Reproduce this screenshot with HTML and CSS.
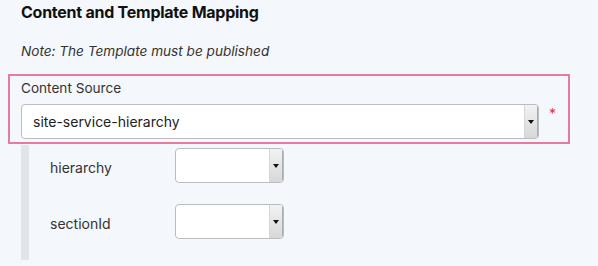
FILE: index.html
```html
<!DOCTYPE html>
<html>

<head>
    <link rel="stylesheet" href="styles.css">
</head>

<body>
    <div class="mapping">
        <h2>Content and Template Mapping</h2>
        <p class="note">Note: The Template must be published</p>

        <div class="source-box">
            <div class="field-label">Content Source</div>
            <div class="field-row">
                <div class="select select-wide">
                    <span class="select-value">site-service-hierarchy</span>
                    <span class="select-arrow"></span>
                </div>
                <span class="required">*</span>
            </div>
        </div>

        <div class="params">
            <div class="param-row">
                <div class="param-label">hierarchy</div>
                <div class="select select-small">
                    <span class="select-value"></span>
                    <span class="select-arrow"></span>
                </div>
            </div>
            <div class="param-row">
                <div class="param-label">sectionId</div>
                <div class="select select-small">
                    <span class="select-value"></span>
                    <span class="select-arrow"></span>
                </div>
            </div>
        </div>
    </div>
</body>

</html>
```

FILE: styles.css
```css
* {
    margin: 0;
    padding: 0;
    box-sizing: border-box;
}

body {
    font-family: 'Inter', 'Noto Sans', sans-serif;
    background-color: #f4f7fb;
    color: #1d1f22;
    width: 598px;
    height: 266px;
    overflow: hidden;
}

.mapping {
    padding: 2px 0 0 8px;
}

h2 {
    font-size: 16px;
    line-height: 20px;
    font-weight: 700;
    color: #111;
    margin-left: 13px;
    letter-spacing: -0.25px;
}

.note {
    font-size: 13.6px;
    line-height: 20px;
    font-style: italic;
    color: #333;
    margin: 19px 0 0 13px;
}

.source-box {
    width: 562px;
    height: 70px;
    margin-top: 13px;
    border: 2px solid #e97a9f;
    padding: 2px 0 0 11px;
}

.field-label {
    font-size: 13.6px;
    line-height: 20px;
    color: #333;
}

.field-row {
    display: flex;
    align-items: flex-start;
    margin-top: 6px;
}

.select {
    display: flex;
    background: #fff;
    border: 1px solid #b9bcc1;
    border-radius: 4px;
    height: 35px;
    overflow: hidden;
}

.select-wide {
    width: 518px;
}

.select-small {
    width: 109px;
}

.select-value {
    flex: 1;
    font-size: 14px;
    line-height: 33px;
    padding-left: 11px;
    color: #222;
}

.select-arrow {
    width: 14px;
    border-left: 1px solid #d4d6d9;
    border-right: 1px solid #a9adb2;
    background: linear-gradient(#f2f2f2, #d8d8d8);
    position: relative;
}

.select-arrow::after {
    content: "";
    position: absolute;
    left: 3px;
    top: 15px;
    border-left: 3px solid transparent;
    border-right: 3px solid transparent;
    border-top: 4px solid #111;
}

.required {
    color: #e0304f;
    font-size: 14px;
    margin: 1px 0 0 10px;
}

.params {
    margin: 1px 0 0 13px;
    border-left: 8px solid #e1e4e8;
    height: 115px;
    padding: 3px 0 0 21px;
    display: flex;
    flex-direction: column;
    gap: 21px;
}

.param-row {
    display: flex;
    align-items: center;
}

.param-label {
    width: 125px;
    font-size: 14px;
    color: #333;
    padding-top: 4px;
}
```
